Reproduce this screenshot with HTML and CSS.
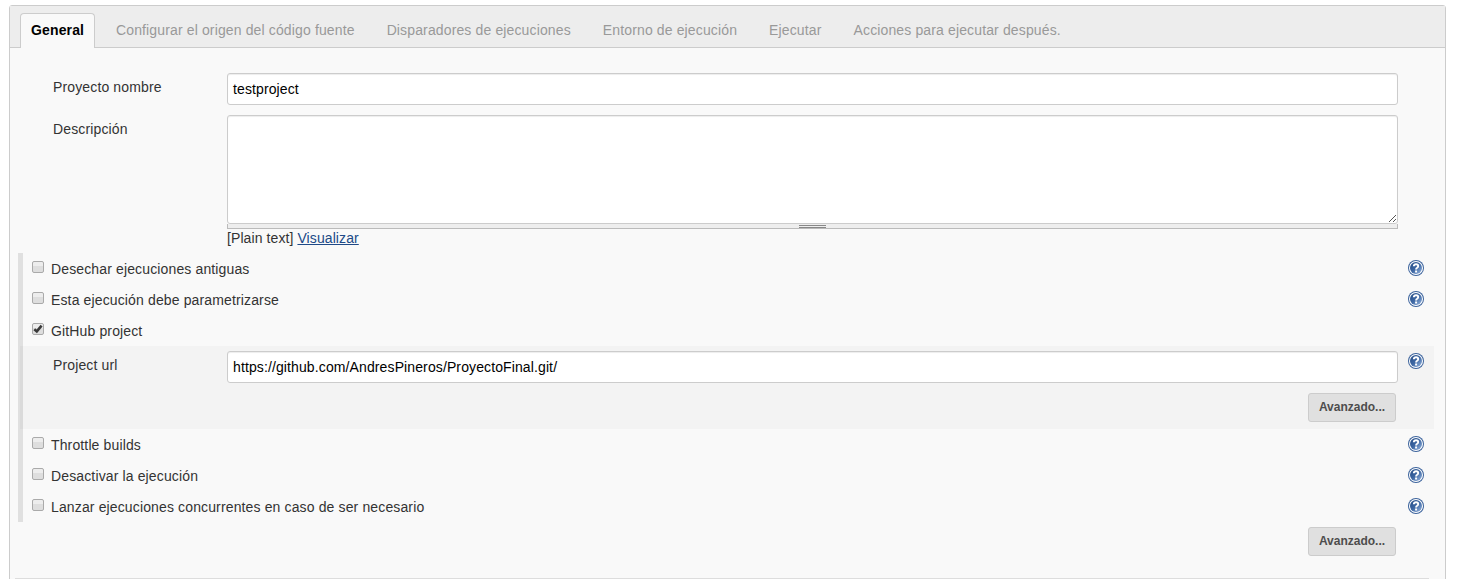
FILE: index.html
```html
<!DOCTYPE html>
<html lang="es">
<head>
<meta charset="utf-8">
<title>testproject Config</title>
<link rel="stylesheet" href="styles.css">
</head>
<body>
<svg class="defs" width="0" height="0">
  <defs>
    <linearGradient id="disc" x1="0" y1="0" x2="1" y2="1"><stop offset="0" stop-color="#234a84"/><stop offset=".5" stop-color="#3d67a3"/><stop offset="1" stop-color="#9dbbe4"/></linearGradient>
    <symbol id="help" viewBox="0 0 16 16">
      <circle cx="8" cy="8" r="8" fill="#3c639c"/>
      <circle cx="8" cy="8" r="7" fill="#fff"/>
      <circle cx="8" cy="8" r="6" fill="url(#disc)"/>
      <path d="M5.8 6.2Q5.9 4.2 8.1 4.2Q10.2 4.2 10.2 6Q10.2 7 9.1 7.7Q8.1 8.3 8.1 9.6" fill="none" stroke="#fff" stroke-width="1.9"/>
      <rect x="7.1" y="10.5" width="2" height="2" fill="#fff"/>
    </symbol>
  </defs>
</svg>
<main class="panel">
  <nav class="tabs">
    <a class="tab active">General</a>
    <a class="tab">Configurar el origen del código fuente</a>
    <a class="tab">Disparadores de ejecuciones</a>
    <a class="tab">Entorno de ejecución</a>
    <a class="tab">Ejecutar</a>
    <a class="tab">Acciones para ejecutar después.</a>
  </nav>
  <div class="body">
    <div class="field">
      <div class="label">Proyecto nombre</div>
      <div class="input">testproject</div>
    </div>
    <div class="field description">
      <div class="label">Descripción</div>
      <div class="editor">
        <div class="textarea"><svg class="grip" width="9" height="9" viewBox="0 0 9 9" shape-rendering="crispEdges"><path d="M1 8L8 1M5 8L8 5" stroke="#555" fill="none"/></svg></div>
        <div class="handle"><span class="handle-grip"></span></div>
        <div class="preview">[Plain text] <a class="link">Visualizar</a></div>
      </div>
    </div>
    <div class="options">
      <div class="option"><span class="check"></span><span class="text">Desechar ejecuciones antiguas</span><svg class="help"><use href="#help"/></svg></div>
      <div class="option"><span class="check"></span><span class="text">Esta ejecución debe parametrizarse</span><svg class="help"><use href="#help"/></svg></div>
      <div class="option"><span class="check"><svg class="tick" width="10" height="10" viewBox="0 0 10 10"><path d="M1.3 5.2L3.8 7.4L8.6 1.6" fill="none" stroke="#3a3a3a" stroke-width="2.6"/></svg></span><span class="text">GitHub project</span></div>
      <div class="nested">
        <div class="field">
          <div class="label">Project url</div>
          <div class="input">https://github.com/AndresPineros/ProyectoFinal.git/</div>
          <svg class="help"><use href="#help"/></svg>
        </div>
        <div class="actions"><span class="button">Avanzado...</span></div>
      </div>
      <div class="option"><span class="check"></span><span class="text">Throttle builds</span><svg class="help"><use href="#help"/></svg></div>
      <div class="option"><span class="check"></span><span class="text">Desactivar la ejecución</span><svg class="help"><use href="#help"/></svg></div>
      <div class="option"><span class="check"></span><span class="text">Lanzar ejecuciones concurrentes en caso de ser necesario</span><svg class="help"><use href="#help"/></svg></div>
    </div>
    <div class="actions outer"><span class="button">Avanzado...</span></div>
    <div class="divider"></div>
  </div>
</main>
</body>
</html>
```
FILE: styles.css
```css
* { box-sizing: border-box; }
body {
  margin: 0;
  height: 579px;
  overflow: hidden;
  padding: 5px 11px 0 9px;
  background: #fff;
  color: #333;
  font: 14px/18px "Liberation Sans", Arial, sans-serif;
  letter-spacing: .135px;
}
.defs { position: absolute; }
.panel {
  height: 600px;
  border: 1px solid #ccc;
  border-radius: 3px 3px 0 0;
  background: #f9f9f9;
}
.tabs {
  display: flex;
  align-items: flex-end;
  height: 42px;
  padding-left: 10px;
  background: #ededed;
  border-bottom: 1px solid #ccc;
}
.tab {
  height: 35px;
  margin-bottom: -1px;
  padding: 8px 16px 0;
  color: #999;
  white-space: nowrap;
}
.tab.active {
  width: 75px;
  margin-right: 5px;
  padding: 7px 0 0 10px;
  border: 1px solid #ccc;
  border-bottom: 0;
  border-radius: 4px 4px 0 0;
  background: #f9f9f9;
  color: #000;
  font-weight: bold;
}
.body { padding: 25px 11px 0 8px; }
.field { display: flex; align-items: flex-start; }
.label { width: 209px; padding: 5px 0 0 35px; }
.input {
  width: 1171px;
  height: 32px;
  padding: 6px 5px;
  border: 1px solid #ccc;
  border-radius: 3px;
  background: #fff;
  box-shadow: inset 0 1px 1px rgba(0, 0, 0, .075);
  color: #000;
  letter-spacing: .115px;
}
.description { height: 138px; margin-top: 10px; }
.editor { width: 1171px; }
.textarea {
  display: flex;
  justify-content: flex-end;
  align-items: flex-end;
  height: 109px;
  border: 1px solid #ccc;
  border-radius: 3px;
  background: #fff;
  box-shadow: inset 0 1px 1px rgba(0, 0, 0, .075);
}
.handle {
  display: flex;
  justify-content: center;
  height: 5px;
  border: solid #bbb;
  border-width: 0 1px 1px;
  background: #eee;
}
.handle-grip {
  width: 27px;
  height: 3px;
  margin-top: 1px;
  border: solid #888;
  border-width: 1px 0;
}
.preview { letter-spacing: .09px; }
.link { color: #204a87; text-decoration: underline; }
.options { border-left: 5px solid #e0e0e0; }
.option { display: flex; align-items: flex-start; height: 31px; padding: 7px 10px 0 9px; }
.check {
  display: flex;
  flex: none;
  width: 12px;
  height: 12px;
  margin: 1px 7px 0 0;
  border: 1px solid #aaa;
  border-radius: 2px;
  background: linear-gradient(#ededed 38%, #dedede 38%);
}
.help { flex: none; width: 16px; height: 16px; margin-left: auto; }
.nested {
  height: 83px;
  margin-left: -3px;
  padding: 5px 0 0 3px;
  background: linear-gradient(90deg, #dadada 3px, #f3f3f3 3px);
}
.nested .label { width: 204px; padding-left: 30px; }
.nested .help { margin: 2px 10px 0 auto; }
.actions { display: flex; justify-content: flex-end; padding: 10px 38px 0 0; }
.outer { padding-top: 5px; }
.button {
  width: 88px;
  height: 29px;
  padding: 4px 0 0;
  border: 1px solid #ccc;
  border-radius: 3px;
  background: #e0e0e0;
  color: #4d4d4d;
  font-size: 12px;
  font-weight: bold;
  text-align: center;
  letter-spacing: 0;
}
.divider { width: 1414px; margin: 22px 0 0 -3px; border-top: 1px solid #ddd; }
```
